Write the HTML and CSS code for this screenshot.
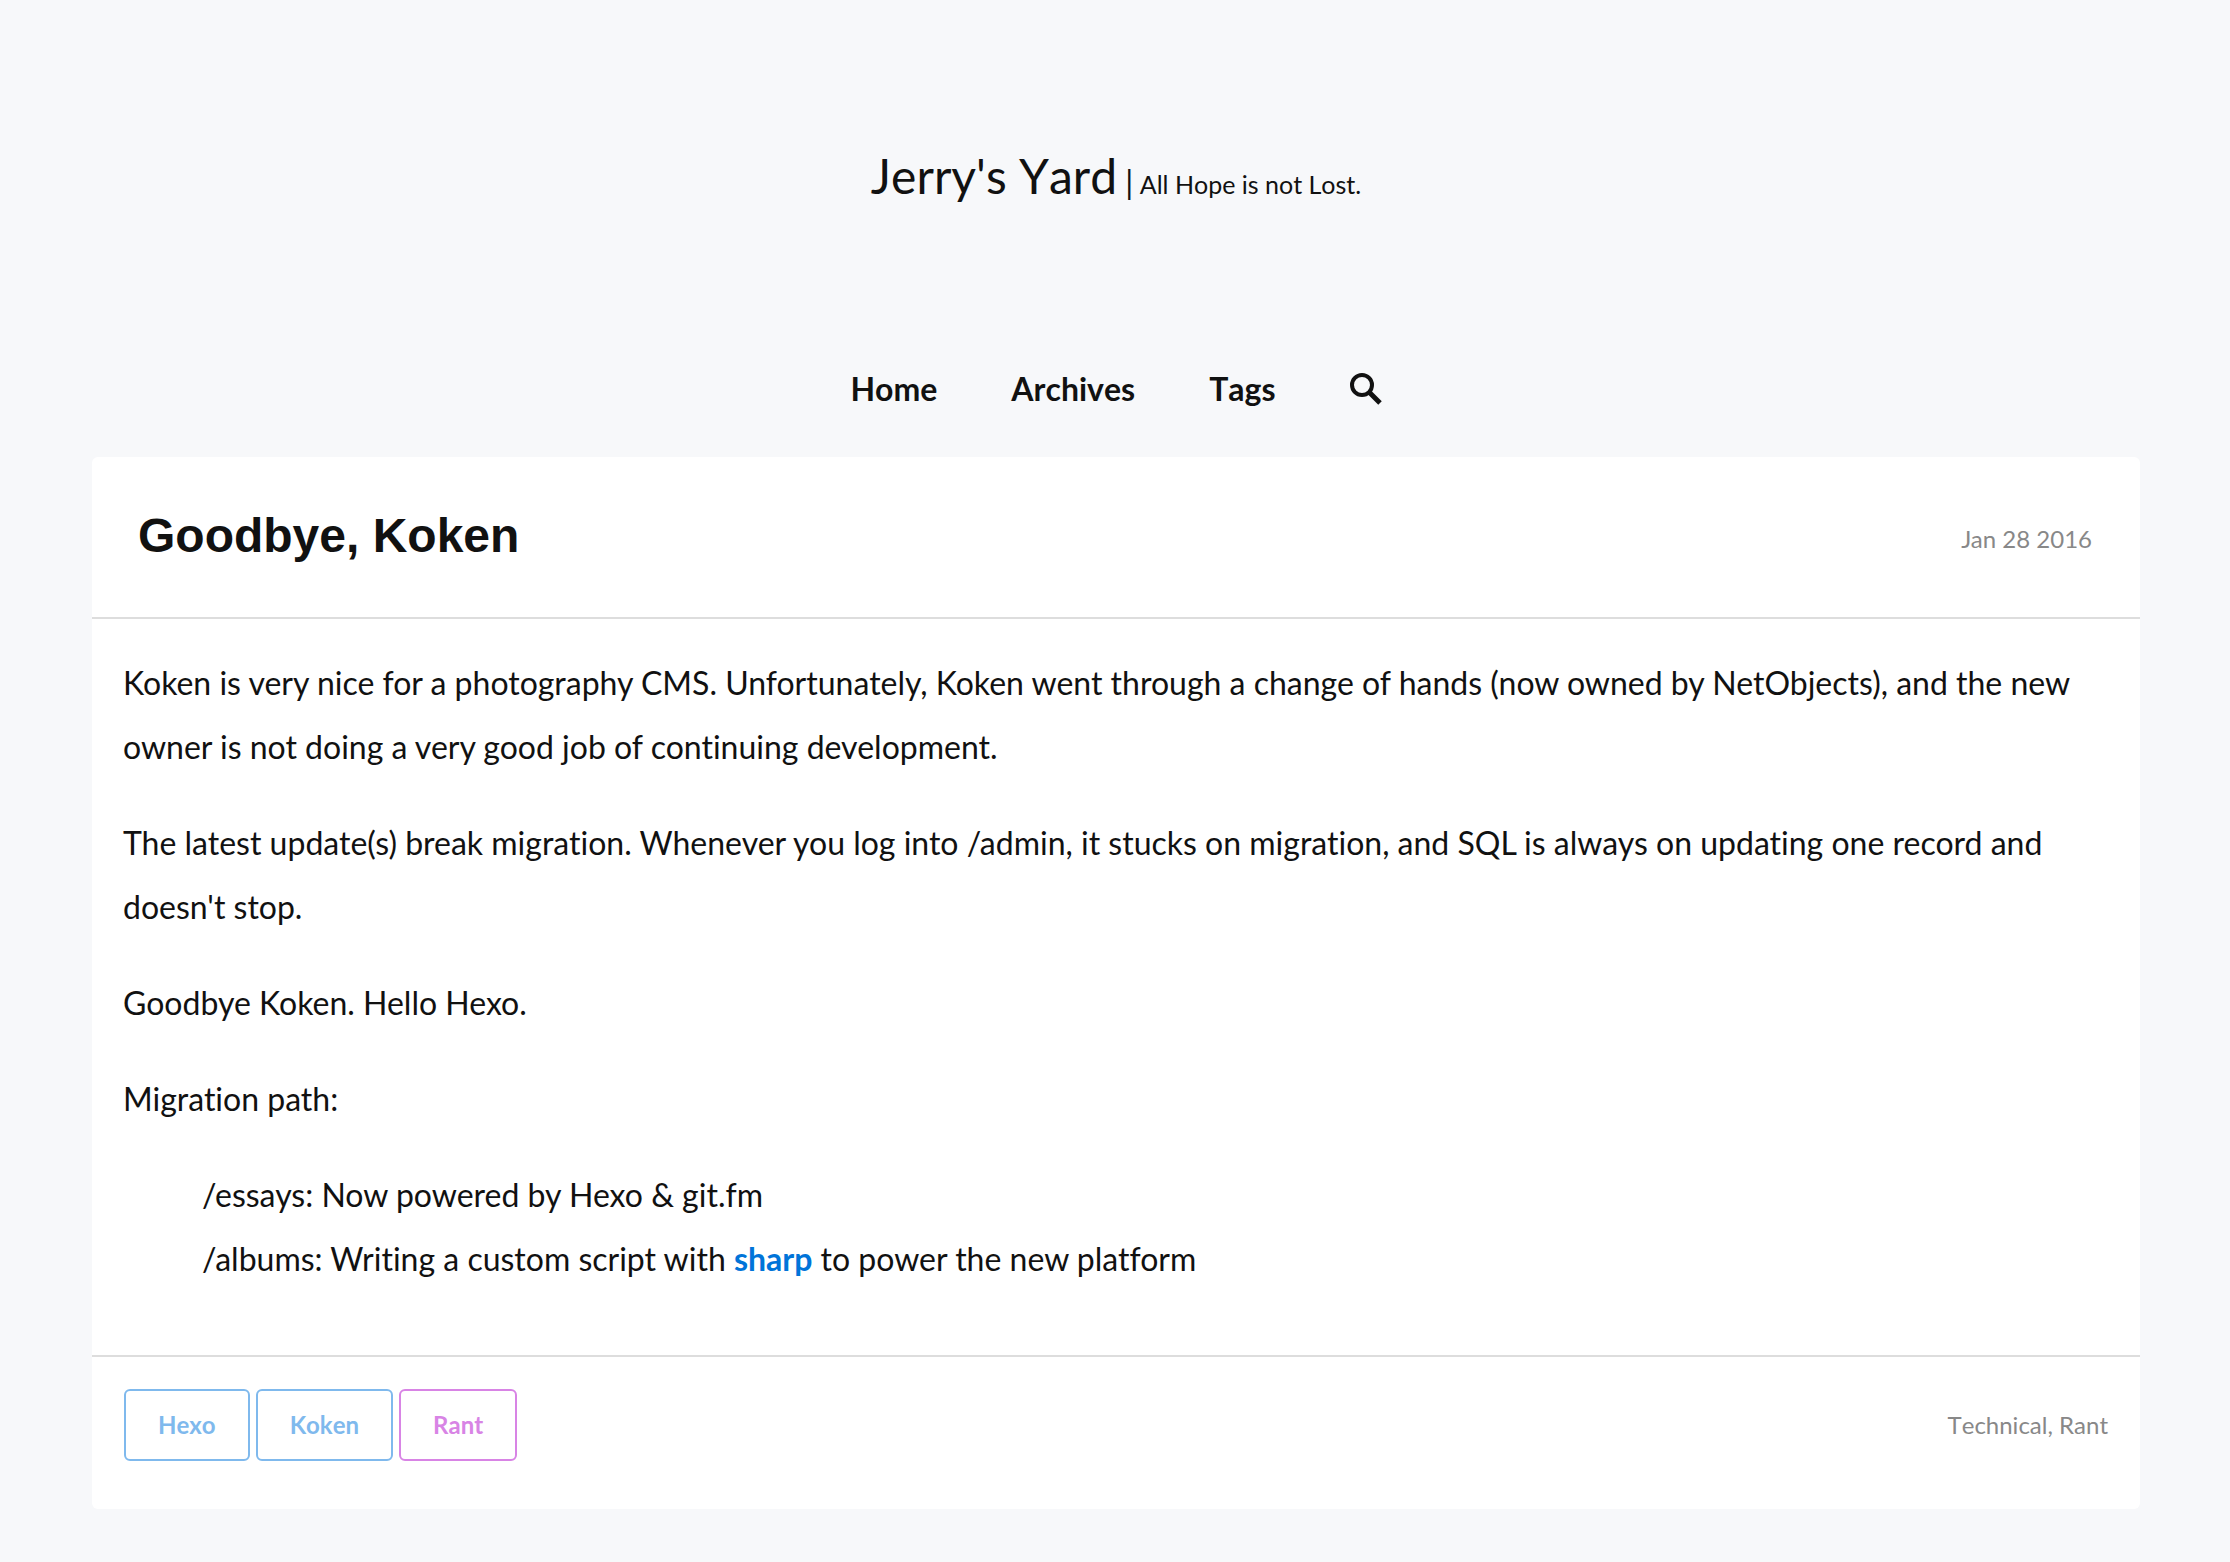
FILE: index.html
```html
<!DOCTYPE html>
<html lang="en">
<head>
<meta charset="utf-8">
<title>Goodbye, Koken | Jerry's Yard</title>
<link rel="stylesheet" href="styles.css">
</head>
<body>
<header class="site-header">
  <a class="site-title" href="#">Jerry's Yard</a>
  <span class="site-tagline"><span class="divider">|</span> All Hope is not Lost.</span>
</header>
<nav class="site-nav">
  <a href="#">Home</a>
  <a href="#">Archives</a>
  <a href="#">Tags</a>
  <a href="#" aria-label="Search"><svg class="search-icon" viewBox="0 0 32 32" aria-hidden="true"><circle cx="12" cy="12" r="10"/><path class="handle" d="M18.5 18.5 30 30"/></svg></a>
</nav>
<main>
  <article class="post">
    <header class="post-header">
      <h1 class="post-title">Goodbye, Koken</h1>
      <time class="post-meta post-date" datetime="2016-01-28">Jan 28 2016</time>
    </header>
    <div class="post-body">
      <p>Koken is very nice for a photography CMS. Unfortunately, Koken went through a change of hands (now owned by NetObjects), and the new owner is not doing a very good job of continuing development.</p>
      <p>The latest update(s) break migration. Whenever you log into /admin, it stucks on migration, and SQL is always on updating one record and doesn't stop.</p>
      <p>Goodbye Koken. Hello Hexo.</p>
      <p>Migration path:</p>
      <ul>
        <li>/essays: Now powered by Hexo &amp; git.fm</li>
        <li>/albums: Writing a custom script with <a href="#">sharp</a> to power the new platform</li>
      </ul>
    </div>
    <footer class="post-footer">
      <div class="tags">
        <a class="tag" href="#">Hexo</a>
        <a class="tag" href="#">Koken</a>
        <a class="tag tag-pink" href="#">Rant</a>
      </div>
      <span class="post-meta">Technical, Rant</span>
    </footer>
  </article>
</main>
</body>
</html>
```
FILE: styles.css
```css
* { box-sizing: border-box; }

body {
  margin: 0;
  padding: 0 90px 52px 92px;
  background: #f7f8fa;
  color: #111;
  font-family: Lato, sans-serif;
  font-size: 32px;
  line-height: 64px;
  font-variant-ligatures: none;
}

a { color: inherit; text-decoration: none; }

.site-header {
  padding: 144px 0 143px;
  text-align: center;
  font-kerning: none;
}
.site-title { font-size: 48px; }
.site-tagline { font-size: 25px; line-height: 32px; }
.divider { font-size: 32px; }

.site-nav {
  display: flex;
  justify-content: center;
  gap: 74px;
  padding-bottom: 36px;
  font-weight: 700;
  font-kerning: none;
}
.site-nav a { display: flex; align-items: center; }

.search-icon {
  width: 32px;
  height: 32px;
  fill: none;
  stroke: #111;
  stroke-width: 4;
}
.search-icon .handle { stroke-width: 5; }

.post { background: #fff; border-radius: 6px; }

.post-header {
  display: flex;
  justify-content: space-between;
  align-items: center;
  padding: 44px 48px 46px 46px;
  border-bottom: 2px solid #ddd;
}
.post-title {
  margin: 0;
  font: 700 48px/64px "Liberation Sans", Arial, sans-serif;
}
.post-meta { color: #888; font-size: 24px; }
.post-date { padding-top: 6px; }

.post-body { padding: 32px 31px 64px; }
.post-body p { margin: 0 0 32px; }
.post-body ul { margin: 0; padding-left: 79px; list-style: none; }
.post-body li a { color: #0074d9; font-weight: 700; }

.post-footer {
  display: flex;
  justify-content: space-between;
  align-items: center;
  padding: 32px 32px 48px;
  border-top: 2px solid #ddd;
  font-kerning: none;
}
.tags { display: flex; gap: 6px; }
.tag {
  padding: 0 32px;
  border: 2px solid #7fb9ed;
  border-radius: 6px;
  color: #7fb9ed;
  font-size: 24px;
  font-weight: 700;
  line-height: 68px;
}
.tag-pink { border-color: #d884e5; color: #d884e5; }
```
